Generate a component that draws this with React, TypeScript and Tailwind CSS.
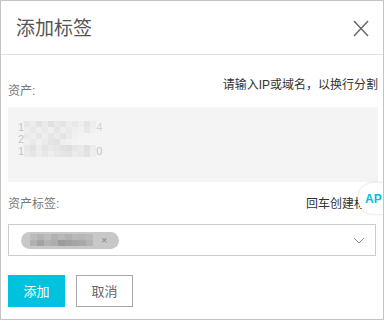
import React from "react";

const line1: string[][] = [
  ["#e6e6e6", "#ececec", "#e2e2e2", "#eaeaea", "#e0e0e0", "#e8e8e8", "#e4e4e4", "#ececec", "#e8e8e8", "#eeeeee", "#e4e4e4", "#eeeeee"],
  ["#eeeeee", "#e8e8e8", "#eeeeee", "#e9e9e9", "#efefef", "#e6e6e6", "#eeeeee", "#e9e9e9", "#efefef", "#f2f2f2", "#e8e8e8", "#f0f0f0"],
];
const line2: string[][] = [
  ["#e9e9e9", "#eeeeee", "#e6e6e6", "#eeeeee", "#e6e6e6", "#ebebeb", "#e4e4e4", "#ebebeb", "#f1f1f1", "#f3f3f3", "#f4f4f4"],
  ["#efefef", "#e9e9e9", "#efefef", "#eaeaea", "#e5e5e5", "#e2e2e2", "#eeeeee", "#f1f1f1", "#f3f3f3", "#f4f4f4", "#f4f4f4"],
];
const line3: string[][] = [
  ["#e8e8e8", "#e2e2e2", "#ececec", "#e4e4e4", "#e9e9e9", "#e6e6e6", "#e1e1e1", "#dedede", "#e6e6e6", "#eaeaea", "#e0e0e0", "#ececec"],
  ["#eaeaea", "#e6e6e6", "#eeeeee", "#e8e8e8", "#eeeeee", "#e8e8e8", "#e6e6e6", "#e4e4e4", "#ececec", "#e8e8e8", "#e2e2e2", "#eeeeee"],
];

const tagMosaic: string[][] = [
  ["#bcbcbc", "#b4b4b4", "#bdbdbd", "#b2b2b2", "#b8b8b8", "#b1b1b1", "#b9b9b9", "#b6b6b6", "#bababa"],
  ["#b0b0b0", "#a3a3a3", "#b3b3b3", "#adadad", "#9c9c9c", "#a1a1a1", "#a6a6a6", "#a9a9a9", "#b4b4b4"],
];

const Mosaic = ({ grid, bw, bh }: { grid: string[][]; bw: number; bh: number }) => {
  const w = grid[0].length * bw;
  const h = grid.length * bh;
  return (
    <svg width={w} height={h} viewBox={`0 0 ${w} ${h}`} className="block">
      {grid.map((row, r) =>
        row.map((c, i) => (
          <rect key={`${r}-${i}`} x={i * bw} y={r * bh} width={bw} height={bh} fill={c} />
        ))
      )}
    </svg>
  );
};

const App = () => {
  return (
    <div className="w-[384px] h-[320px] bg-white border border-[#c4c4c4] relative overflow-hidden font-['Liberation_Sans','Noto_Sans_CJK_SC',sans-serif]">
      {/* Header */}
      <div className="flex items-center justify-between h-[54px] border-b border-[#e2e2e2] pl-[15px] pr-[14px]">
        <span className="text-[19px] leading-none text-[#555] mt-[2px]">添加标签</span>
        <svg width="16" height="17" viewBox="0 0 16 17" className="mt-[2px]">
          <path d="M1 1 L15 16 M15 1 L1 16" stroke="#666" strokeWidth="1.4" fill="none" />
        </svg>
      </div>

      <div className="pl-[7px] pr-[5px]">
        {/* Assets label row */}
        <div className="flex justify-between h-[52px] text-[12px] leading-[12px]">
          <span className="mt-[30px] text-[#777]">资产:</span>
          <span className="mt-[24px] text-[#333]">请输入IP或域名，以换行分割</span>
        </div>

        {/* Textarea */}
        <div className="h-[75px] bg-[#f4f4f4] pt-[14px] pl-[10px] text-[11px] leading-[12px] text-[#c4c4c4]">
          <div className="flex items-center h-[12px]">
            <span>1</span>
            <Mosaic grid={line1} bw={6} bh={6} />
            <span className="text-[#d4d4d4]">4</span>
          </div>
          <div className="flex items-center h-[12px]">
            <span>2</span>
            <Mosaic grid={line2} bw={6} bh={6} />
          </div>
          <div className="flex items-center h-[12px]">
            <span>1</span>
            <Mosaic grid={line3} bw={6} bh={6} />
            <span>0</span>
          </div>
        </div>

        {/* Tag label row */}
        <div className="flex justify-between h-[42px] text-[12px] leading-[12px]">
          <span className="mt-[16px] text-[#777]">资产标签:</span>
          <span className="mt-[16px] text-[#333]">回车创建标签</span>
        </div>

        {/* Select */}
        <div className="h-[32px] mr-[2px] border border-[#cccccc] flex items-center justify-between pl-[12px] pr-[10px]">
          <div className="h-[17px] w-[98px] rounded-full bg-[#c8c8c8] flex items-center pl-[9px] gap-[8px]">
            <Mosaic grid={tagMosaic} bw={7} bh={6} />
            <span className="text-[11px] leading-none text-[#888]">×</span>
          </div>
          <svg width="12" height="7" viewBox="0 0 12 7">
            <path d="M1 1 L6 6 L11 1" stroke="#999" strokeWidth="1" fill="none" />
          </svg>
        </div>

        {/* Buttons */}
        <div className="flex gap-[11px] mt-[19px]">
          <button className="w-[57px] h-[32px] bg-[#00c1de] text-white text-[13px] leading-none">添加</button>
          <button className="w-[57px] h-[32px] border border-[#a8a8a8] bg-white text-[#666] text-[13px] leading-none">取消</button>
        </div>
      </div>

      {/* Floating bubble */}
      <div className="absolute left-[357px] top-[182px] w-[40px] h-[31px] rounded-full bg-white shadow-[0_0_3px_rgba(0,0,0,0.18)] flex items-center pl-[7px]">
        <span className="text-[12px] font-bold leading-none text-[#00c1de]">AP</span>
      </div>
    </div>
  );
};

export default App;
